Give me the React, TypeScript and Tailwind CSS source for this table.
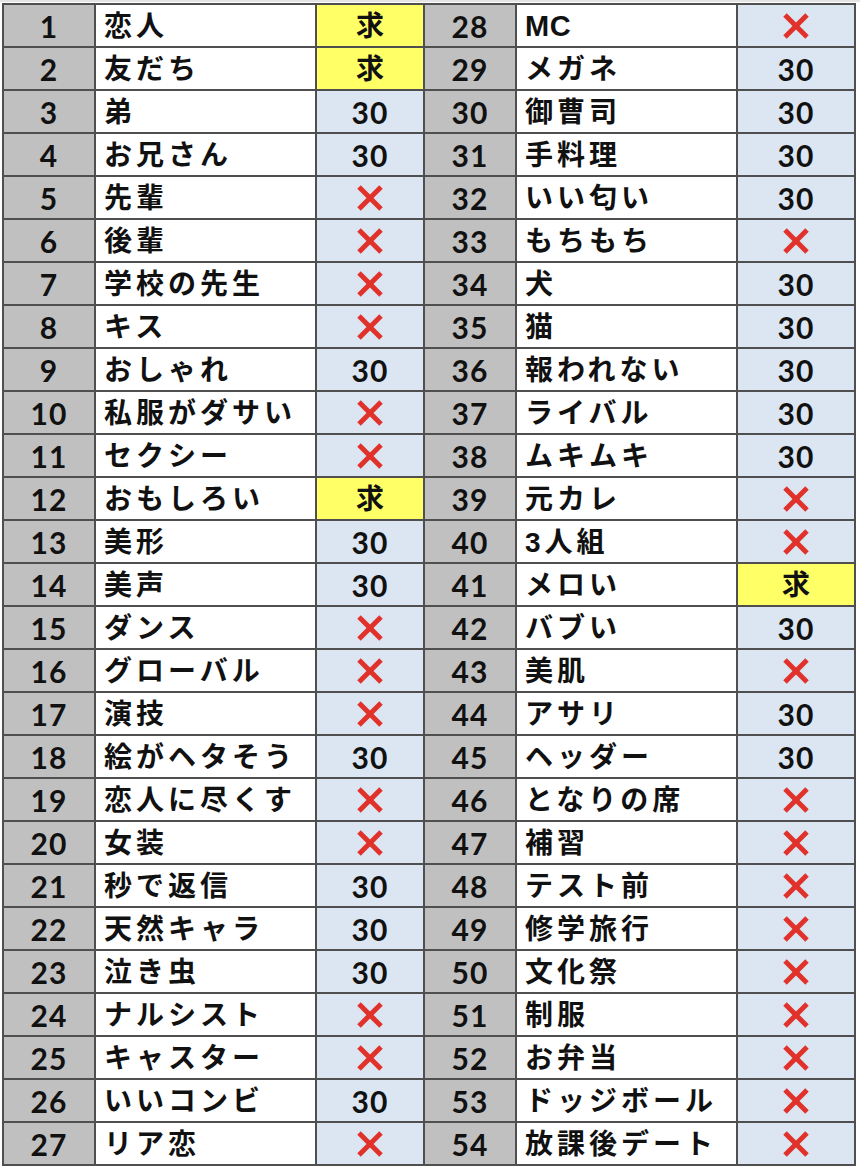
import React from "react";

type Row = [number, string, string];

const left: Row[] = [
  [1, "恋人", "求"],
  [2, "友だち", "求"],
  [3, "弟", "30"],
  [4, "お兄さん", "30"],
  [5, "先輩", "x"],
  [6, "後輩", "x"],
  [7, "学校の先生", "x"],
  [8, "キス", "x"],
  [9, "おしゃれ", "30"],
  [10, "私服がダサい", "x"],
  [11, "セクシー", "x"],
  [12, "おもしろい", "求"],
  [13, "美形", "30"],
  [14, "美声", "30"],
  [15, "ダンス", "x"],
  [16, "グローバル", "x"],
  [17, "演技", "x"],
  [18, "絵がヘタそう", "30"],
  [19, "恋人に尽くす", "x"],
  [20, "女装", "x"],
  [21, "秒で返信", "30"],
  [22, "天然キャラ", "30"],
  [23, "泣き虫", "30"],
  [24, "ナルシスト", "x"],
  [25, "キャスター", "x"],
  [26, "いいコンビ", "30"],
  [27, "リア恋", "x"],
];

const right: Row[] = [
  [28, "MC", "x"],
  [29, "メガネ", "30"],
  [30, "御曹司", "30"],
  [31, "手料理", "30"],
  [32, "いい匂い", "30"],
  [33, "もちもち", "x"],
  [34, "犬", "30"],
  [35, "猫", "30"],
  [36, "報われない", "30"],
  [37, "ライバル", "30"],
  [38, "ムキムキ", "30"],
  [39, "元カレ", "x"],
  [40, "3人組", "x"],
  [41, "メロい", "求"],
  [42, "バブい", "30"],
  [43, "美肌", "x"],
  [44, "アサリ", "30"],
  [45, "ヘッダー", "30"],
  [46, "となりの席", "x"],
  [47, "補習", "x"],
  [48, "テスト前", "x"],
  [49, "修学旅行", "x"],
  [50, "文化祭", "x"],
  [51, "制服", "x"],
  [52, "お弁当", "x"],
  [53, "ドッジボール", "x"],
  [54, "放課後デート", "x"],
];

function Cross() {
  return (
    <svg width="30" height="30" viewBox="0 0 30 30" className="block">
      <line x1="4" y1="4" x2="26" y2="26" stroke="#e0322a" strokeWidth="5" />
      <line x1="26" y1="4" x2="4" y2="26" stroke="#e0322a" strokeWidth="5" />
    </svg>
  );
}

const numFont = { fontFamily: 'Lato, "Noto Sans CJK JP", sans-serif' };
const jpFont = { fontFamily: '"Liberation Sans", "Noto Sans CJK JP", sans-serif' };

function Cells({ row }: { row: Row }) {
  const [n, label, v] = row;
  const isReq = v === "求";
  const latin = /^[A-Z]+$/.test(label);
  return (
    <>
      <div
        className="bg-[#c0c0c0] flex items-center justify-center text-[30px] tracking-[1px]"
        style={numFont}
      >
        {n}
      </div>
      <div
        className={
          "bg-white flex items-center pl-[8px] pt-[2px] text-[28px] whitespace-nowrap overflow-hidden " +
          (latin ? "tracking-[0.5px] text-[29px]" : "tracking-[4px]")
        }
        style={jpFont}
      >
        {label}
      </div>
      <div
        className={
          (isReq ? "bg-[#ffff66] pt-[2px] text-[28px]" : "bg-[#dce6f2] text-[30px] tracking-[1px]") +
          " flex items-center justify-center"
        }
        style={isReq ? jpFont : numFont}
      >
        {v === "x" ? <Cross /> : v}
      </div>
    </>
  );
}

export default function App() {
  return (
    <div className="w-[860px] h-[1171px] bg-white overflow-hidden">
      <div className="h-[2px] bg-[#e4e4e4]" />
      <div className="pl-[2px] pt-[1px]">
        <div className="grid grid-cols-[90px_219px_106px_90px_219px_116px] auto-rows-[41px] gap-[2px] bg-[#4f4f4f] p-[2px] w-[854px] font-bold text-[#111] leading-none">
          {left.map((r, i) => (
            <React.Fragment key={i}>
              <Cells row={r} />
              <Cells row={right[i]} />
            </React.Fragment>
          ))}
        </div>
      </div>
    </div>
  );
}
